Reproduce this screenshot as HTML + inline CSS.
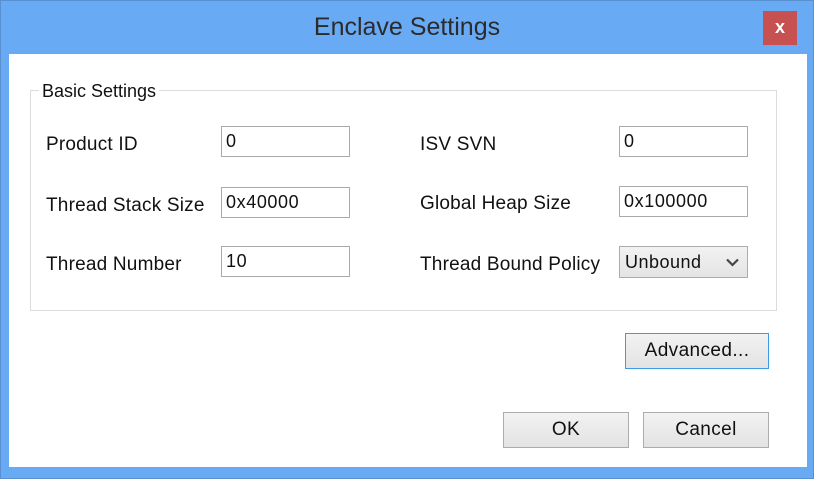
<!DOCTYPE html>
<html><head><style>
body{margin:0;width:814px;height:479px;background:#fff;font-family:"Liberation Sans",sans-serif;overflow:hidden}
.frame{position:absolute;left:0;top:0;width:812px;height:477px;background:#69aaf5;border:1px solid #5a8fd0}
.title{position:absolute;left:0;width:814px;top:13px;text-align:center;font-size:25px;color:#2b2b2b}
.close{position:absolute;left:763px;top:11px;width:34px;height:34px;background:#c75050;color:#fff;font-weight:bold;font-size:18px;text-align:center;line-height:33px}
.client{position:absolute;left:9px;top:54px;width:798px;height:413px;background:#fff}
.group{position:absolute;left:30px;top:90px;width:745px;height:219px;border:1px solid #dcdcdc}
.glabel{position:absolute;left:39px;top:81px;background:#fff;padding:0 3px;font-size:18px;color:#111}
.lbl{position:absolute;font-size:19px;color:#111;letter-spacing:0.2px}
.inp{position:absolute;border:1px solid #aaa;background:#fff;font-size:18px;letter-spacing:0.6px;line-height:29px;padding-left:4px;box-sizing:border-box;width:129px;height:31px;color:#111}
.sel{position:absolute;left:619px;top:246px;width:129px;height:32px;border:1px solid #acacac;background:linear-gradient(#f2f2f2,#e4e4e4);box-sizing:border-box;font-size:18px;letter-spacing:0.5px;line-height:30px;padding-left:5px;color:#111}
.btn{position:absolute;border:1px solid #acacac;background:linear-gradient(#f2f2f2,#e3e3e3);box-sizing:border-box;text-align:center;font-size:19px;letter-spacing:0.4px;color:#111}
</style></head><body>
<div class="frame"></div>
<div class="title">Enclave Settings</div>
<div class="close">x</div>
<div class="client"></div>
<div class="group"></div>
<div class="glabel">Basic Settings</div>
<div class="lbl" style="left:46px;top:134px">Product ID</div>
<div class="lbl" style="left:46px;top:195px">Thread Stack Size</div>
<div class="lbl" style="left:46px;top:254px">Thread Number</div>
<div class="lbl" style="left:420px;top:134px">ISV SVN</div>
<div class="lbl" style="left:420px;top:193px">Global Heap Size</div>
<div class="lbl" style="left:420px;top:254px">Thread Bound Policy</div>
<div class="inp" style="left:221px;top:126px">0</div>
<div class="inp" style="left:221px;top:187px">0x40000</div>
<div class="inp" style="left:221px;top:246px">10</div>
<div class="inp" style="left:619px;top:126px">0</div>
<div class="inp" style="left:619px;top:186px">0x100000</div>
<div class="sel">Unbound<svg style="position:absolute;right:8px;top:11px" width="13" height="9"><path d="M1 1.5L6.5 7L12 1.5" stroke="#444" stroke-width="2.2" fill="none"/></svg></div>
<div class="btn" style="left:625px;top:333px;width:144px;height:36px;line-height:34px;border:1px solid #3c9be8">Advanced...</div>
<div class="btn" style="left:503px;top:412px;width:126px;height:36px;line-height:34px">OK</div>
<div class="btn" style="left:643px;top:412px;width:126px;height:36px;line-height:34px">Cancel</div>
</body></html>
